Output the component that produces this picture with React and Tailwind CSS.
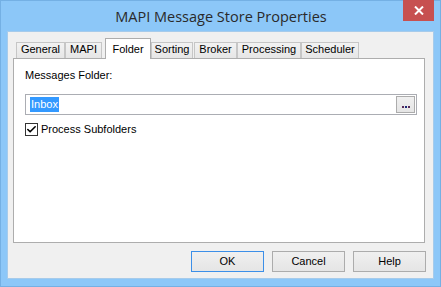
import { Check } from 'lucide-react';

const tabs = [
  { label: 'General', cls: 'ml-[8px] w-[49px]' },
  { label: 'MAPI', cls: 'w-[37px]' },
  { label: 'Folder', cls: 'ml-[3px] w-[46px]', active: true },
  { label: 'Sorting', cls: 'w-[42px]' },
  { label: 'Broker', cls: 'ml-[1px] w-[43px]' },
  { label: 'Processing', cls: 'w-[64px]' },
  { label: 'Scheduler', cls: 'w-[58px]' },
];

function Tab({ label, active, cls }) {
  if (active) {
    return (
      <div className={`relative z-10 -mb-px h-[21px] border border-b-0 border-[#adadad] bg-white flex items-start justify-center pt-[2px] ${cls}`}>
        {label}
      </div>
    );
  }
  return (
    <div className={`h-[16px] border border-b-0 border-[#c6c6c6] bg-gradient-to-b from-[#f2f2f2] to-[#e6e6e6] flex items-end justify-center pb-[1px] ${cls}`}>
      {label}
    </div>
  );
}

function Btn({ children, primary }) {
  return (
    <button
      className={`w-[73px] h-[21px] border bg-gradient-to-b from-[#f0f0f0] to-[#e5e5e5] text-[11px] text-black flex items-center justify-center ${primary ? 'border-[#3c8fe8]' : 'border-[#acacac]'}`}
    >
      {children}
    </button>
  );
}

export default function App() {
  return (
    <div
      className="w-[441px] h-[287px] bg-[#8cc7f8] border border-[#74b0e4] flex flex-col text-[11px] text-black"
      style={{ fontFamily: '"Liberation Sans", Arial, sans-serif' }}
    >
      {/* title bar */}
      <div className="h-[30px] flex items-start relative shrink-0">
        <div
          className="flex-1 text-center text-[14.5px] text-[#2a2a2a] pt-[5px] pl-[1px]"
          style={{ fontFamily: '"Open Sans", "Noto Sans", sans-serif' }}
        >
          MAPI Message Store Properties
        </div>
        <div className="absolute right-[6px] top-[-1px] w-[31px] h-[21px] bg-[#c75050] flex items-center justify-center">
          <svg width="10" height="9" viewBox="0 0 10 9">
            <path d="M1 0.5 L9 8.5 M9 0.5 L1 8.5" stroke="#fff" strokeWidth="2" />
          </svg>
        </div>
      </div>

      {/* client area */}
      <div className="mx-[6px] mb-[7px] flex-1 bg-[#f0f0f0] border border-[#a6cbeb] flex flex-col pt-[6px]">
        <div className="flex items-end h-[20px] shrink-0 relative z-10">
          {tabs.map((t) => (
            <Tab key={t.label} {...t} />
          ))}
        </div>
        <div className="ml-[5px] mr-[8px] h-[185px] bg-white border border-[#adadad] pl-[11px] pr-[7px] pt-[9px] flex flex-col">
          <div className="leading-[14px]">Messages Folder:</div>
          <div className="mt-[12px] h-[21px] border border-[#abadb3] flex items-center pl-[5px] pr-[1px]">
            <span className="bg-[#3399ff] text-white h-[15px] leading-[15px] px-[1px] -ml-px">Inbox</span>
            <div className="ml-auto w-[19px] h-[17px] border border-[#acacac] bg-gradient-to-b from-[#f0f0f0] to-[#e5e5e5] flex items-end justify-center pb-[4px] gap-[1px]">
              <span className="w-[2px] h-[2px] bg-[#5a2a5a]" />
              <span className="w-[2px] h-[2px] bg-[#1a2a7a]" />
              <span className="w-[2px] h-[2px] bg-[#5a2a5a]" />
            </div>
          </div>
          <div className="mt-[6px] flex items-center gap-[3px]">
            <div className="w-[13px] h-[13px] border border-[#333] bg-white flex items-center justify-center">
              <Check size={11} strokeWidth={3.5} color="#000" />
            </div>
            <span>Process Subfolders</span>
          </div>
        </div>
        <div className="flex justify-end gap-[8px] pr-[7px] mt-[8px]">
          <Btn primary>OK</Btn>
          <Btn>Cancel</Btn>
          <Btn>Help</Btn>
        </div>
      </div>
    </div>
  );
}
